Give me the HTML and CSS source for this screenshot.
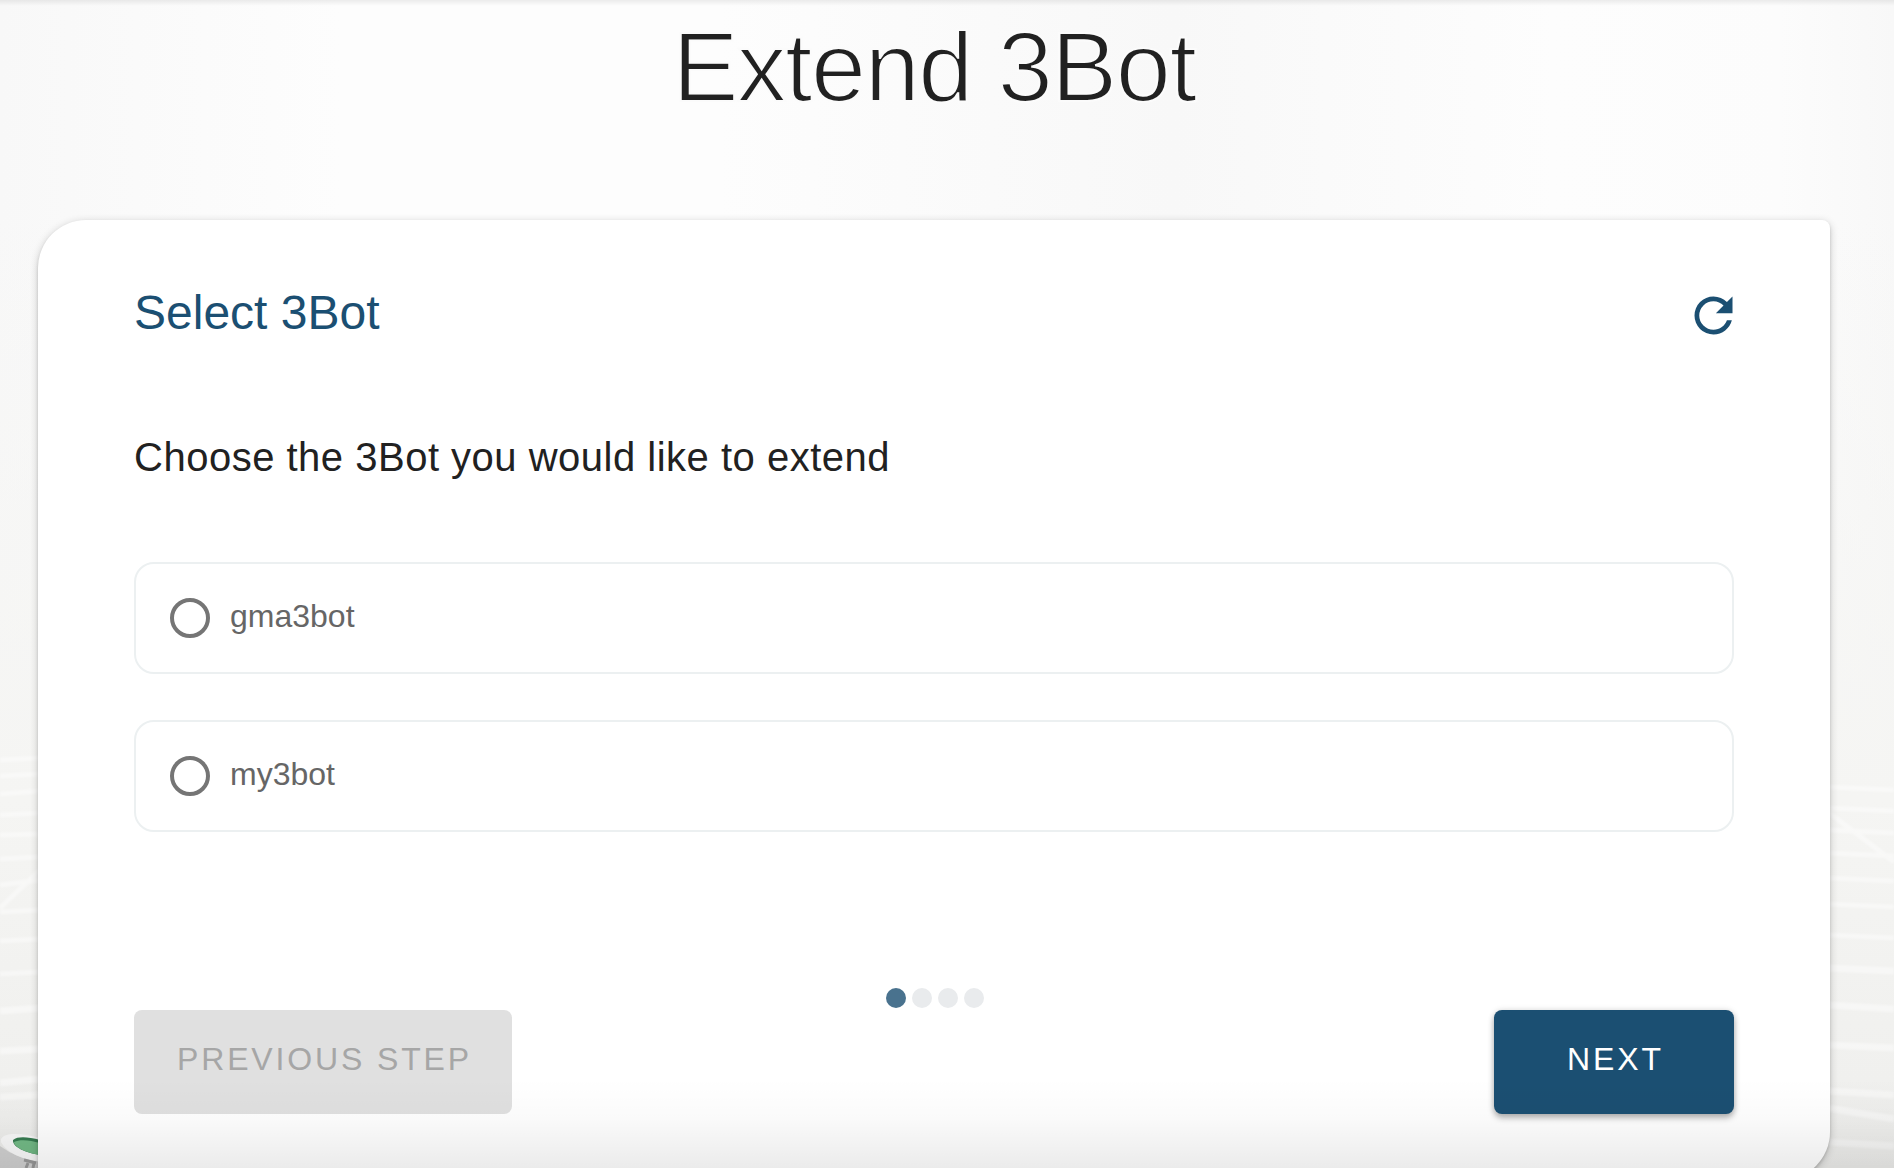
FILE: index.html
```html
<!DOCTYPE html>
<html lang="en">
<head>
<meta charset="utf-8">
<title>Extend 3Bot</title>
<link rel="stylesheet" href="styles.css">
</head>
<body>
<svg class="backdrop" viewBox="0 0 1894 1168" aria-hidden="true">
  <g class="lines" fill="none" stroke="#fff">
    <path stroke-width="5" d="M0 760L40 758M0 776L40 774M0 794L40 791M0 815L40 813M0 835L40 834M0 859L40 857M0 908L40 870M0 885L40 880M0 912L40 910M0 941L40 939M0 974L40 972"/>
    <path stroke-width="7" d="M0 1011L40 1008M0 1051L40 1049M0 1083L40 1079M0 1097L40 1095"/>
    <path stroke-width="5" d="M1828 787L1894 790M1828 808L1894 811M1828 812L1894 862M1828 830L1894 833M1828 853L1894 856M1828 878L1894 881M1828 904L1894 907M1828 935L1894 938"/>
    <path stroke-width="7" d="M1828 968L1894 971M1828 1005L1894 1009M1828 1045L1894 1048M1828 1091L1894 1095M1828 1108L1894 1119M1828 1142L1894 1146"/>
  </g>
  <g class="planet">
    <path fill="#cfcfcf" d="M0 1146Q16 1158 40 1162V1168H0Z"/>
    <path fill="#f8f8f8" d="M1 1139C4 1133 18 1132 40 1138V1161C22 1160 6 1152 1 1142Z"/>
    <path fill="#367b50" d="M13 1140C18 1136 28 1137 40 1140V1155C26 1153 12 1147 13 1140Z"/>
    <path fill="#72b985" d="M14 1142C20 1139 30 1140 40 1143V1155C26 1153 14 1147 14 1142Z"/>
    <path d="M24 1160L36 1163M28 1163L26 1168M34 1163L33 1168" stroke="#999" stroke-width="3"/>
  </g>
</svg>
<main class="page">
  <h1 class="title">Extend 3Bot</h1>
  <section class="card">
    <header class="card-head">
      <h2 class="subtitle">Select 3Bot</h2>
      <svg class="refresh" viewBox="0 0 24 24" role="img" aria-label="Refresh"><path fill="currentColor" d="M17.65 6.35C16.2 4.9 14.21 4 12 4A8 8 0 0 0 4 12A8 8 0 0 0 12 20C15.73 20 18.84 17.45 19.73 14H17.65C16.83 16.33 14.61 18 12 18A6 6 0 0 1 6 12A6 6 0 0 1 12 6C13.66 6 15.14 6.69 16.22 7.78L13 11H20V4L17.65 6.35Z"/></svg>
    </header>
    <p class="prompt">Choose the 3Bot you would like to extend</p>
    <div class="options">
      <label class="option"><span class="radio"></span><span class="name">gma3bot</span></label>
      <label class="option"><span class="radio"></span><span class="name">my3bot</span></label>
    </div>
    <div class="dots"><i class="dot active"></i><i class="dot"></i><i class="dot"></i><i class="dot"></i></div>
    <footer class="actions">
      <button class="btn previous" disabled>PREVIOUS STEP</button>
      <button class="btn next">NEXT</button>
    </footer>
  </section>
</main>
<div class="fade"></div>
</body>
</html>
```
FILE: styles.css
```css
* { box-sizing: border-box; }
body {
  margin: 0;
  height: 1168px;
  overflow: hidden;
  position: relative;
  font-family: "Liberation Sans", Arial, sans-serif;
  color: #212121;
  background:
    linear-gradient(rgba(0,0,0,.07), transparent 6px),
    linear-gradient(rgba(245,245,243,0) 220px, #f5f5f3 800px, #f0f0ee 1080px, #ebebe9 1168px),
    linear-gradient(90deg, #f8f8f8, #fdfdfd 18%, #fdfdfd 38%, #f8f8f8 62%, #fdfdfd 82%, #fcfcfc 94%, #f8f8f8);
}
.backdrop { position: absolute; inset: 0; width: 1894px; height: 1168px; }
.lines { stroke-opacity: .42; filter: blur(1px); }
.planet { filter: blur(.6px); }
.page { position: relative; padding: 0 64px 0 38px; }
.title {
  margin: 0;
  height: 220px;
  padding-top: 9px;
  text-align: center;
  font-size: 99px;
  line-height: 116px;
  font-weight: 400;
  letter-spacing: -1.5px;
  -webkit-text-stroke: 2.2px #fbfbfb;
}
.card {
  display: flex;
  flex-direction: column;
  height: 960px;
  padding: 66px 96px;
  background: #fff;
  border-radius: 48px 8px 48px 8px;
  box-shadow: 0 2px 8px rgba(0,0,0,.2), 0 2px 3px rgba(0,0,0,.14);
}
.card-head { display: flex; justify-content: space-between; height: 60px; color: #1b4f72; }
.subtitle { margin: 0; font-size: 48px; line-height: 54px; font-weight: 400; }
.refresh { width: 57px; height: 57px; margin: 1px -8px 0 0; }
.prompt { margin: 88px 0 0; font-size: 40px; line-height: 46px; letter-spacing: .5px; }
.options { display: flex; flex-direction: column; gap: 46px; margin-top: 82px; }
.option {
  display: flex;
  align-items: center;
  gap: 20px;
  height: 112px;
  padding-left: 34px;
  border: 2px solid #ecf0f1;
  border-radius: 20px;
}
.radio { width: 40px; height: 40px; border: 4px solid #757575; border-radius: 50%; }
.name { font-size: 32px; line-height: 36px; color: #666; margin-top: -4px; }
.dots { display: flex; justify-content: center; gap: 6px; margin-top: 156px; height: 20px; padding-left: 2px; }
.dot { width: 20px; height: 20px; border-radius: 50%; background: #e9ebed; }
.dot.active { background: #49728e; }
.actions { display: flex; justify-content: space-between; margin-top: 2px; }
.btn {
  height: 104px;
  padding: 0 0 6px 3px;
  border: 0;
  border-radius: 8px;
  font: 400 32px/36px "Liberation Sans", Arial, sans-serif;
  letter-spacing: 2.86px;
}
.previous { width: 378px; background: #e0e0e0; color: #a6a6a6; }
.next { width: 240px; background: #1b4f72; color: #fff; box-shadow: 0 4px 6px rgba(0,0,0,.28), 0 0 6px rgba(0,0,0,.12); }
.fade {
  position: absolute;
  inset: auto 0 0;
  height: 90px;
  background: linear-gradient(transparent, rgba(0,0,0,.018) 45%, rgba(0,0,0,.08));
  pointer-events: none;
}
```
